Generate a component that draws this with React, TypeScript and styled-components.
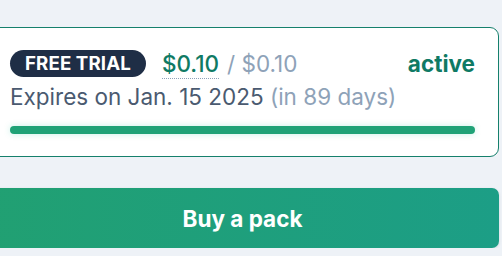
import React from "react";
import styled, { createGlobalStyle } from "styled-components";

const Global = createGlobalStyle`
  html, body { margin: 0; padding: 0; background: #eef2f7; overflow: hidden; }
  body { font-family: Inter, "Noto Sans", sans-serif; }
`;

const Page = styled.div`
  width: 513px;
  margin-left: -14px;
  padding-top: 27px;
  display: flex;
  flex-direction: column;
  gap: 31px;
`;

const Card = styled.div`
  box-sizing: border-box;
  height: 130px;
  background: #ffffff;
  border: 1px solid #15806c;
  border-radius: 9px;
  padding: 22px 23px 0 23px;
  display: flex;
  flex-direction: column;
`;

const TopRow = styled.div`
  display: flex;
  align-items: center;
  height: 27px;
`;

const Badge = styled.span`
  display: inline-flex;
  align-items: center;
  height: 27px;
  padding: 0 15px;
  border-radius: 14px;
  background: #1f2e46;
  color: #ffffff;
  font-weight: 700;
  font-size: 18.7px;
  letter-spacing: 0.1px;
`;

const Price = styled.span<{ $muted?: boolean }>`
  font-size: 22.5px;
  line-height: 26px;
  font-weight: ${(p) => (p.$muted ? 400 : 500)};
  color: ${(p) => (p.$muted ? "#8ea2b8" : "#0f7a64")};
  ${(p) =>
    p.$muted
      ? ""
      : `border-bottom: 1px dotted #8ea2b8; padding-bottom: 1px; margin-top: 3px;`}
`;

const Prices = styled.div`
  display: flex;
  align-items: center;
  gap: 8px;
  margin-left: 16px;
`;

const Status = styled.span`
  margin-left: auto;
  font-size: 22.5px;
  font-weight: 700;
  color: #0f7a64;
`;

const Expiry = styled.div`
  margin-top: 7px;
  font-size: 22.5px;
  color: #4a5a70;
  line-height: 26px;
`;

const Remaining = styled.span`
  color: #8ea2b8;
`;

const Bar = styled.div`
  margin-top: 16px;
  height: 8px;
  border-radius: 4px;
  background: #20a277;
  box-shadow: 0 0 6px rgba(32, 200, 160, 0.25);
`;

const BuyButton = styled.button`
  height: 60px;
  border: none;
  border-radius: 7px;
  background: linear-gradient(90deg, #21a072 0%, #1c9e86 100%);
  color: #ffffff;
  font-family: Inter, "Noto Sans", sans-serif;
  font-size: 22.5px;
  font-weight: 700;
  box-shadow: 0 1px 3px rgba(15, 40, 60, 0.12);
  cursor: pointer;
`;

export default function App() {
  return (
    <>
      <Global />
      <Page>
        <Card>
          <TopRow>
            <Badge>FREE TRIAL</Badge>
            <Prices>
              <Price>$0.10</Price>
              <Price $muted>/ $0.10</Price>
            </Prices>
            <Status>active</Status>
          </TopRow>
          <Expiry>
            Expires on Jan. 15 2025 <Remaining>(in 89 days)</Remaining>
          </Expiry>
          <Bar />
        </Card>
        <BuyButton>Buy a pack</BuyButton>
      </Page>
    </>
  );
}
